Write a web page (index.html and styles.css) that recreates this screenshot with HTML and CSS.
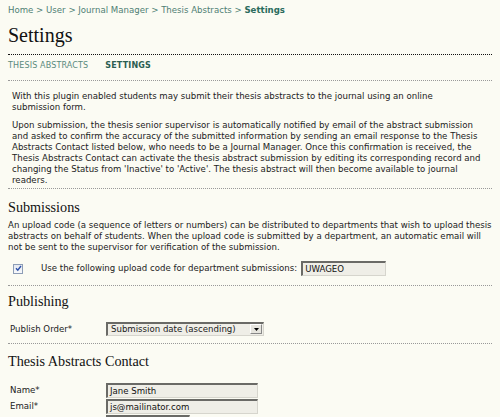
FILE: index.html
```html
<!DOCTYPE html>
<html>
<head>
<meta charset="utf-8">
<link rel="stylesheet" href="styles.css">
</head>
<body>
<div class="page">
  <div class="crumbs"><a>Home</a> &gt; <a>User</a> &gt; <a>Journal Manager</a> &gt; <a>Thesis Abstracts</a> &gt; <a class="current">Settings</a></div>
  <h2 class="title">Settings</h2>
  <div class="tabs"><a class="tab">THESIS ABSTRACTS</a><a class="tab active">SETTINGS</a></div>
  <div class="intro">
    <p>With this plugin enabled students may submit their thesis abstracts to the journal using an online<br>submission form.</p>
    <p>Upon submission, the thesis senior supervisor is automatically notified by email of the abstract submission and asked to confirm the accuracy of the submitted information by sending an email response to the Thesis Abstracts Contact listed below, who needs to be a Journal Manager. Once this confirmation is received, the Thesis Abstracts Contact can activate the thesis abstract submission by editing its corresponding record and changing the Status from 'Inactive' to 'Active'. The thesis abstract will then become available to journal readers.</p>
  </div>
  <div class="section sec-sub">
    <h3 class="heading">Submissions</h3>
    <p class="desc">An upload code (a sequence of letters or numbers) can be distributed to departments that wish to upload thesis abstracts on behalf of students. When the upload code is submitted by a department, an automatic email will not be sent to the supervisor for verification of the submission.</p>
    <div class="checkrow">
      <span class="check"><svg width="9" height="9" viewBox="0 0 9 9"><path d="M2 4.2 L3.8 6.2 L7 2" fill="none" stroke="#2b4fa8" stroke-width="1.4"/></svg></span>
      <span class="checklabel">Use the following upload code for department submissions:</span>
      <span class="field short">UWAGEO</span>
    </div>
  </div>
  <div class="section sec-pub">
    <h3 class="heading">Publishing</h3>
    <div class="formrow">
      <span class="label">Publish Order*</span>
      <span class="select"><span class="selval">Submission date (ascending)</span><span class="selbtn"><svg width="5" height="3" viewBox="0 0 5 3"><path d="M0 0 H5 L2.5 3 Z" fill="#000"/></svg></span></span>
    </div>
  </div>
  <div class="section sec-contact">
    <h3 class="heading">Thesis Abstracts Contact</h3>
    <div class="formrow tight first">
      <span class="label">Name*</span>
      <span class="field wide">Jane Smith</span>
    </div>
    <div class="formrow tight">
      <span class="label">Email*</span>
      <span class="field wide">js@mailinator.com</span>
    </div>
    <div class="formrow tight">
      <span class="label"></span>
      <span class="field short2"></span>
    </div>
  </div>
</div>
</body>
</html>
```
FILE: styles.css
```css
html, body {
  margin: 0;
  padding: 0;
  background: #fbfbf3;
}
body {
  font-family: "DejaVu Sans", Verdana, sans-serif;
  font-size: 8.6px;
  line-height: 11px;
  color: #222;
  overflow: hidden;
  height: 417px;
}
.page {
  padding: 0 8px;
}
.crumbs {
  padding-top: 4px;
  line-height: 12px;
  color: #4f8074;
}
.crumbs a { color: #4f8074; }
.crumbs .current { color: #2b6b5d; font-weight: bold; }
.title {
  margin: 7px 0 0;
  font-family: "Liberation Serif", Georgia, serif;
  font-weight: normal;
  font-size: 20px;
  line-height: 24px;
  color: #111;
  padding-bottom: 7px;
  border-bottom: 1px dotted #111;
}
.tabs {
  display: flex;
  gap: 17px;
  margin-top: 6px;
  line-height: 10px;
  height: 10px;
  padding-bottom: 9px;
  border-bottom: 1px dotted #999;
}
.tab {
  font-size: 8px;
  letter-spacing: 0.15px;
  color: #5a8a7d;
}
.tab.active {
  font-weight: bold;
  color: #2b5e52;
}
.intro {
  padding: 10px 4px 2px;
  border-bottom: 1px dotted #999;
}
.intro p { margin: 0 0 7px; }
.intro p:last-child { margin-bottom: 0; }
.section {
  border-bottom: 1px dotted #999;
}
.heading {
  margin: 0;
  font-family: "Liberation Serif", Georgia, serif;
  font-weight: normal;
  font-size: 14.2px;
  line-height: 18px;
  color: #111;
}
.sec-sub .heading { margin-top: 9px; }
.sec-pub .heading { margin-top: 6px; }
.sec-contact .heading { margin-top: 8px; }
.desc { margin: 4px 0 0; }
.checkrow {
  display: flex;
  align-items: center;
  height: 15px;
  margin-top: 8px;
  margin-bottom: 9px;
}
.check {
  width: 8px;
  height: 8px;
  margin-left: 5px;
  border: 1px solid #8d9db6;
  background: linear-gradient(#e4e8f0, #f8f9fb);
  display: flex;
}
.check svg { margin: -0.5px; }
.checklabel { margin-left: 18px; margin-right: 4px; }
.field {
  display: block;
  box-sizing: border-box;
  height: 15px;
  line-height: 11px;
  padding: 1px 2px;
  background: #efeee7;
  border-top: 2px solid #6a6a66;
  border-left: 2px solid #6a6a66;
  border-right: 1px solid #d6d5cd;
  border-bottom: 1px solid #d6d5cd;
  color: #111;
}
.field.short { width: 85px; }
.field.wide { width: 152px; }
.field.short2 { width: 84px; }
.formrow {
  display: flex;
  align-items: center;
  margin-top: 12px;
  margin-bottom: 7px;
}
.label {
  width: 96px;
  padding-left: 2px;
  flex: none;
}
.select {
  box-sizing: border-box;
  width: 158px;
  height: 14px;
  display: flex;
  align-items: stretch;
  background: #efeee7;
  border-top: 2px solid #6a6a66;
  border-left: 2px solid #6a6a66;
  border-right: 1px solid #d6d5cd;
  border-bottom: 1px solid #d6d5cd;
}
.selval {
  flex: 1;
  padding-left: 3px;
  line-height: 11px;
}
.selbtn {
  width: 10px;
  margin: 0 1px 1px 0;
  background: #e6e5de;
  border: 1px solid #fff;
  border-right-color: #888;
  border-bottom-color: #888;
  display: flex;
  align-items: center;
  justify-content: center;
}
.formrow.tight {
  margin-top: 0;
  margin-bottom: 1px;
  height: 15px;
}
.formrow.tight.first { margin-top: 13px; }
.sec-contact { border-bottom: none; }
```
